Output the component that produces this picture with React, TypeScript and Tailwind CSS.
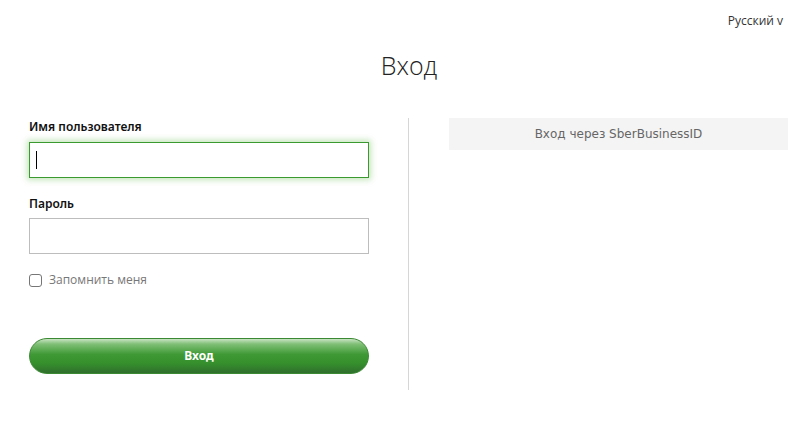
export default function App() {
  return (
    <div className="w-[802px] h-[426px] bg-white relative" style={{ fontFamily: '"Noto Sans", "Open Sans", sans-serif' }}>
      <div className="flex justify-end pr-[19px] pt-[12px] h-[40px]">
        <span className="text-[12px] text-[#333] leading-[18px]" style={{ fontFamily: '"Open Sans", sans-serif' }}>Русский v</span>
      </div>
      <div className="flex justify-center h-[52px] pl-[16px]">
        <h1 className="text-[25px] font-light text-[#222] leading-[50px]" style={{ fontFamily: '"Open Sans", sans-serif' }}>Вход</h1>
      </div>
      <div className="flex mt-[26px]">
        <div className="w-[340px] ml-[29px] flex flex-col">
          <label className="text-[12px] font-semibold text-[#111] leading-[18px]">Имя пользователя</label>
          <div className="mt-[6px] h-[36px] border border-[#3a9a2f] shadow-[0_0_6px_2px_rgba(90,180,60,0.35)] flex items-center pl-[6px]">
            <div className="w-px h-[18px] bg-black" />
          </div>
          <label className="text-[12px] font-semibold text-[#111] leading-[18px] mt-[17px]">Пароль</label>
          <div className="mt-[5px] h-[36px] border border-[#bdbdbd]" />
          <div className="flex items-center mt-[19px] h-[14px]">
            <div className="w-[13px] h-[13px] border border-[#767676] rounded-[3px]" />
            <span className="ml-[7px] text-[12px] text-[#777]" style={{ fontFamily: '"Open Sans", sans-serif' }}>Запомнить меня</span>
          </div>
          <button className="mt-[51px] h-[36px] rounded-full border border-[#3b8a33] text-white text-[12px] font-bold bg-[linear-gradient(to_bottom,#c8e3c3_0%,#7fbf76_15%,#3f9a35_45%,#36912c_70%,#2f6f2e_100%)]">
            Вход
          </button>
        </div>
        <div className="ml-[39px] w-px h-[272px] bg-[#d6d6d6]" />
        <div className="ml-[40px] w-[339px]">
          <div className="h-[32px] bg-[#f4f4f4] flex items-center justify-center text-[12px] text-[#666]" style={{ fontFamily: '"DejaVu Sans", sans-serif' }}>
            Вход через SberBusinessID
          </div>
        </div>
      </div>
    </div>
  );
}
